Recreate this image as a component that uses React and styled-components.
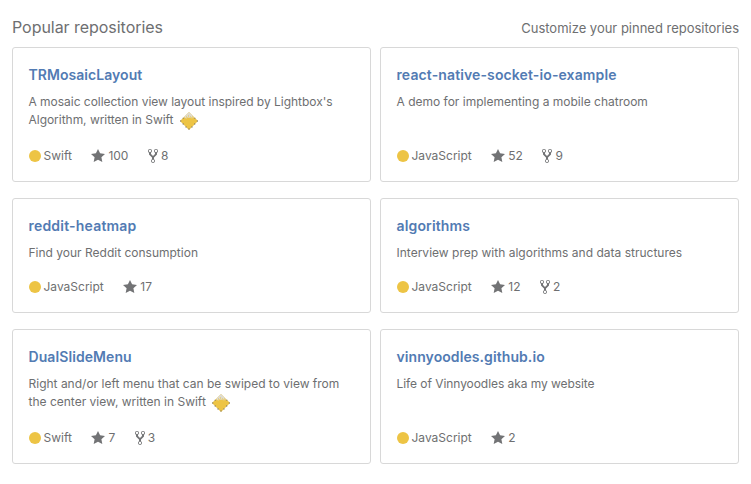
import React from 'react';
import styled, { createGlobalStyle } from 'styled-components';

const GlobalStyle = createGlobalStyle`
  * { box-sizing: border-box; }
  body {
    margin: 0;
    background: #fff;
    color: #6e6f71;
    font-family: Inter, "Liberation Sans", sans-serif;
    font-weight: 420;
  }
`;

const Page = styled.main`
  width: 751px;
  height: 484px;
  padding: 17px 12px 0;
  background: #fff;
`;

const Header = styled.header`
  display: flex;
  justify-content: space-between;
  align-items: flex-start;
  height: 30px;
`;

const Heading = styled.h2`
  margin: 0;
  font-size: 16px;
  line-height: 20px;
  font-weight: 420;
  letter-spacing: -0.04px;
`;

const CustomizeLink = styled.a`
  margin-top: 1px;
  font-size: 13px;
  line-height: 20px;
  letter-spacing: -0.01px;
`;

const Grid = styled.ol`
  display: grid;
  grid-template-columns: 359px 359px;
  grid-template-rows: 135px 115px 135px;
  column-gap: 9px;
  row-gap: 16px;
  margin: 0;
  padding: 0;
  list-style: none;
`;

const Card = styled.li`
  display: flex;
  flex-direction: column;
  padding: 17px 16px 16px 15.5px;
  border: 1px solid #d8d8d8;
  border-radius: 3px;
`;

const Name = styled.a`
  font-size: 14px;
  line-height: 20px;
  font-weight: 600;
  color: #527bb3;
  letter-spacing: ${(p) => p.$tracking}px;
  white-space: nowrap;
`;

const Description = styled.p`
  margin: 8px 0 0;
  font-size: 12px;
  line-height: 18px;
  letter-spacing: ${(p) => p.$tracking}px;
  white-space: nowrap;
`;

const Meta = styled.div`
  display: flex;
  align-items: center;
  gap: 19.5px;
  height: 18px;
  margin-top: auto;
  font-size: 12px;
  line-height: 18px;
`;

const Stat = styled.span`
  display: flex;
  align-items: center;
  gap: 3px;
`;

const Dot = styled.i`
  width: 12px;
  height: 12px;
  margin-top: -1px;
  border-radius: 50%;
  background: #edc445;
`;

const Icon = styled.svg`
  display: block;
  margin-top: -1px;
  fill: #727375;
`;

const Gem = styled.svg`
  display: inline-block;
  margin: -6px 0 -6px 5px;
  vertical-align: -1px;
`;

const StarIcon = () => (
  <Icon width="14" height="16" viewBox="0 0 14 16">
    <path d="M14 6l-4.9-.64L7 1 4.9 5.36 0 6l3.6 3.26L2.67 14 7 11.67 11.33 14l-.93-4.74z" />
  </Icon>
);

const ForkIcon = () => (
  <Icon width="10" height="16" viewBox="0 0 10 16">
    <path d="M8 1a1.993 1.993 0 0 0-1 3.72V6L5 8 3 6V4.72A1.993 1.993 0 0 0 2 1a1.993 1.993 0 0 0-1 3.72V6.5l3 3v1.78A1.993 1.993 0 0 0 5 15a1.993 1.993 0 0 0 1-3.72V9.5l3-3V4.72A1.993 1.993 0 0 0 8 1zM2 4.2C1.34 4.2.8 3.65.8 3c0-.65.55-1.2 1.2-1.2.65 0 1.2.55 1.2 1.2 0 .65-.55 1.2-1.2 1.2zm3 10c-.66 0-1.2-.55-1.2-1.2 0-.65.55-1.2 1.2-1.2.65 0 1.2.55 1.2 1.2 0 .65-.55 1.2-1.2 1.2zm3-10c-.66 0-1.2-.55-1.2-1.2 0-.65.55-1.2 1.2-1.2.65 0 1.2.55 1.2 1.2 0 .65-.55 1.2-1.2 1.2z" />
  </Icon>
);

const GemIcon = () => (
  <Gem width="20" height="20" viewBox="0 0 20 20">
    <path d="M10 1L19 10L10 19L1 10Z" fill="#edc445" />
    <path d="M10 1L15 6L13 7.5L10 6.5L7 7.5L5 6Z" fill="#dedbd0" />
    <path d="M7 6h1M9 5h1M11 6h1M13 6h1M8 7h1M12 7h1" stroke="#edc445" />
    <path
      d="M1 10h1.3M3.6 13h1.3M6.4 16h1.3M9.4 18h1.2M12.3 16h1.3M15 13h1.3M17.8 10H19M3.7 7.3h1M15.4 7.3h1"
      stroke="#74706a"
      strokeWidth="1.1"
    />
  </Gem>
);

const repositories = [
  { name: 'TRMosaicLayout', nameTracking: 0.05, textTracking: -0.03, lines: ["A mosaic collection view layout inspired by Lightbox's", 'Algorithm, written in Swift'], gem: true, language: 'Swift', stars: 100, forks: 8 },
  { name: 'react-native-socket-io-example', nameTracking: 0.12, lines: ['A demo for implementing a mobile chatroom'], language: 'JavaScript', stars: 52, forks: 9 },
  { name: 'reddit-heatmap', nameTracking: 0.2, lines: ['Find your Reddit consumption'], language: 'JavaScript', stars: 17 },
  { name: 'algorithms', nameTracking: 0.15, lines: ['Interview prep with algorithms and data structures'], textTracking: 0.01, language: 'JavaScript', stars: 12, forks: 2 },
  { name: 'DualSlideMenu', lines: ['Right and/or left menu that can be swiped to view from', 'the center view, written in Swift'], textTracking: 0, gem: true, language: 'Swift', stars: 7, forks: 3 },
  { name: 'vinnyoodles.github.io', lines: ['Life of Vinnyoodles aka my website'], textTracking: -0.06, language: 'JavaScript', stars: 2 },
];

function RepositoryCard({ repo }) {
  return (
    <Card>
      <Name $tracking={repo.nameTracking ?? 0.08}>{repo.name}</Name>
      <Description $tracking={repo.textTracking ?? 0}>
        {repo.lines.map((line, i) => (
          <React.Fragment key={line}>
            {i > 0 && <br />}
            {line}
          </React.Fragment>
        ))}
        {repo.gem && <GemIcon />}
      </Description>
      <Meta>
        <Stat><Dot />{repo.language}</Stat>
        <Stat><StarIcon />{repo.stars}</Stat>
        {repo.forks && <Stat><ForkIcon />{repo.forks}</Stat>}
      </Meta>
    </Card>
  );
}

export default function App() {
  return (
    <Page>
      <GlobalStyle />
      <Header>
        <Heading>Popular repositories</Heading>
        <CustomizeLink>Customize your pinned repositories</CustomizeLink>
      </Header>
      <Grid>
        {repositories.map((repo) => <RepositoryCard key={repo.name} repo={repo} />)}
      </Grid>
    </Page>
  );
}
